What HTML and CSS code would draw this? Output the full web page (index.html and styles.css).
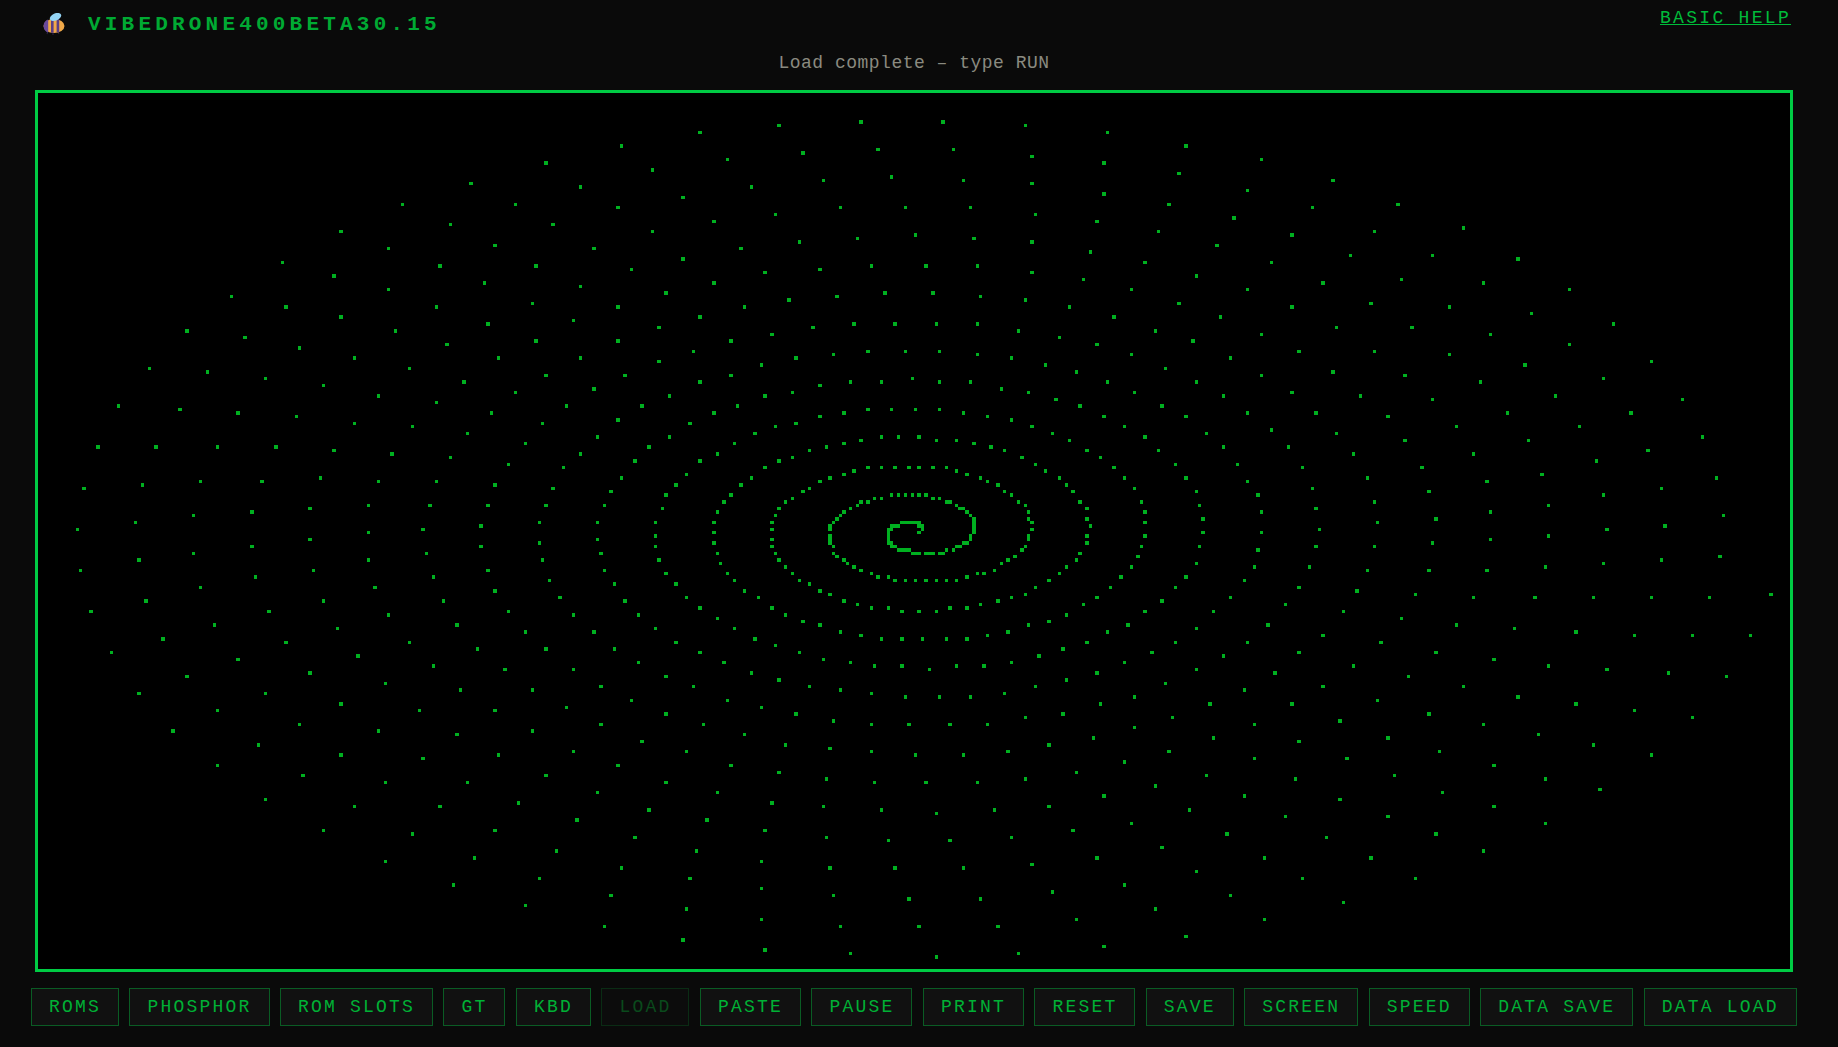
FILE: index.html
```html
<!DOCTYPE html>
<html lang="en">

	<head>
		<meta charset="UTF-8">
		<meta name="viewport" content="width=device-width, initial-scale=1.0">
		<title>VIBEDRONE400BETA30.15</title>
		<link rel="stylesheet" href="styles.css">
	</head>

	<body>

		<div class="header">
			<div class="brand">
				<svg class="bee" viewBox="0 0 22 22" width="22" height="22" aria-hidden="true">
					<path d="M5 18l-1 3M10 19v3M15 19l1 2" stroke="#2a2140" stroke-width="1.2" fill="none"/>
					<ellipse cx="11" cy="13" rx="10.5" ry="7" fill="#f0a848"/>
					<path d="M.6 13c0-3.4 2-5.6 4.6-6.4v13c-2.6-.8-4.6-3-4.6-6.6z" fill="#6a4a9c"/>
					<rect x="8" y="6.2" width="2.6" height="13.6" fill="#5a3f86"/>
					<rect x="13.6" y="6.4" width="2.6" height="13" fill="#5a3f86"/>
					<ellipse cx="12.5" cy="4" rx="6" ry="3.6" transform="rotate(-24 12.5 4)" fill="#93d3f4"/>
				</svg>
				<span class="title">VIBEDRONE400BETA30.15</span>
			</div>
			<a class="help" href="#">BASIC HELP</a>
		</div>

		<div class="status">Load complete – type RUN</div>

		<div class="screen">
			<canvas id="display" width="512" height="256"></canvas>
		</div>

		<div class="toolbar">
			<button>ROMS</button>
			<button>PHOSPHOR</button>
			<button>ROM SLOTS</button>
			<button>GT</button>
			<button>KBD</button>
			<button disabled>LOAD</button>
			<button>PASTE</button>
			<button>PAUSE</button>
			<button>PRINT</button>
			<button>RESET</button>
			<button>SAVE</button>
			<button>SCREEN</button>
			<button>SPEED</button>
			<button>DATA SAVE</button>
			<button>DATA LOAD</button>
		</div>

		<script src="script.js"></script>
	</body>

</html>
```
FILE: styles.css
```css
* {
	box-sizing: border-box;
}

body {
	margin: 0;
	padding: 0 41px 0 31px;
	height: 1047px;
	overflow: hidden;
	background-color: #0a0a0a;
	font-family: "Liberation Mono", "Courier New", monospace;
	color: #00aa33;
}

.header {
	display: flex;
	justify-content: space-between;
	align-items: flex-start;
	height: 50px;
	padding: 8px 6px 0 12px;
}

.brand {
	display: flex;
	align-items: center;
	gap: 23px;
	height: 32px;
}

.title {
	font-size: 21px;
	font-weight: bold;
	letter-spacing: 4.2px;
}

.help {
	color: #00bb3a;
	font-size: 18px;
	letter-spacing: 2.3px;
	text-decoration: underline;
}

.status {
	height: 40px;
	padding-top: 3px;
	text-align: center;
	color: #8a8a80;
	font-size: 18px;
	letter-spacing: 0.5px;
}

.screen {
	margin: 0 4px;
	border: 3px solid #00cc44;
	background-color: #000;
	line-height: 0;
}

.screen canvas {
	width: 1752px;
	height: 876px;
	image-rendering: pixelated;
}

.toolbar {
	display: flex;
	justify-content: space-between;
	margin-top: 16px;
}

.toolbar button {
	height: 38px;
	padding: 0 17px;
	border: 1px solid #0a5c24;
	background-color: #111;
	color: #00b035;
	font-family: inherit;
	font-size: 18px;
	letter-spacing: 2.2px;
	white-space: nowrap;
}

.toolbar button:disabled {
	border-color: #0a2c14;
	background-color: #0c0c0c;
	color: #0a4a1c;
}
```
FILE: script.js
```js
// spiral plotted on the 512x256 display
const canvas = document.getElementById('display');
const ctx = canvas.getContext('2d');
const cx = 255.8;
const cy = 127.6;
const step = 0.1;
const growX = 2.685;
const growY = 1.34;

ctx.fillStyle = '#00b020';
for (let i = 0; i < 942; i++) {
	const a = i * step;
	// the first turns sit a little right of centre
	const drift = 1.2 * Math.exp(-a / 6);
	const x = Math.round(cx + drift + a * growX * Math.cos(a));
	const y = Math.round(cy - a * growY * Math.sin(a));
	ctx.fillRect(x, y, 1, 1);
}
```
